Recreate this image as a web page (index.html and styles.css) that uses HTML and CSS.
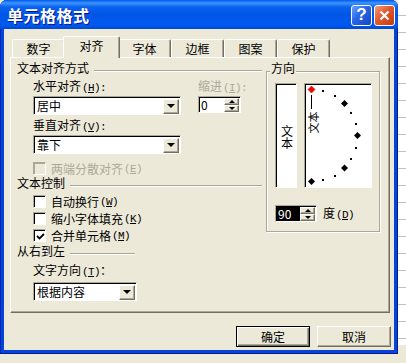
FILE: index.html
```html
<!DOCTYPE html>
<html lang="zh-CN">
<head>
    <meta charset="UTF-8">
    <meta name="viewport" content="width=device-width, initial-scale=1.0">
    <title>单元格格式</title>
    <link rel="stylesheet" href="styles.css">
</head>
<body>
    <div class="window">
        <div class="titlebar">
            <span class="title">单元格格式</span>
            <div class="caption-buttons">
                <span class="cap-btn help">?</span>
                <span class="cap-btn close">
                    <svg width="11" height="11" viewBox="0 0 11 11"><path d="M1.5 1.5 L9.5 9.5 M9.5 1.5 L1.5 9.5" stroke="#fff" stroke-width="2.2" fill="none"/></svg>
                </span>
            </div>
        </div>
        <div class="client">
            <div class="tabs">
                <span class="tab">数字</span>
                <span class="tab active">对齐</span>
                <span class="tab">字体</span>
                <span class="tab">边框</span>
                <span class="tab">图案</span>
                <span class="tab">保护</span>
            </div>
            <div class="panel">
                <div class="col-left">
                    <div class="section"><span>文本对齐方式</span></div>
                    <div class="align-grid">
                        <span class="lbl">水平对齐<span class="key">(<u>H</u>):</span></span>
                        <span class="lbl muted">缩进<span class="key">(<u>I</u>):</span></span>
                        <div class="combo"><span class="combo-text">居中</span><span class="drop"><i></i></span></div>
                        <div class="spin"><span class="spin-val">0</span><span class="spin-btns"><span class="up"><i></i></span><span class="down"><i></i></span></span></div>
                        <span class="lbl">垂直对齐<span class="key">(<u>V</u>):</span></span>
                        <span></span>
                        <div class="combo"><span class="combo-text">靠下</span><span class="drop"><i></i></span></div>
                    </div>
                    <div class="check muted first"><span class="box"></span>两端分散对齐<span class="key">(<u>E</u>)</span></div>
                    <div class="section"><span>文本控制</span></div>
                    <div class="checks">
                        <div class="check"><span class="box"></span>自动换行<span class="key">(<u>W</u>)</span></div>
                        <div class="check"><span class="box"></span>缩小字体填充<span class="key">(<u>K</u>)</span></div>
                        <div class="check"><span class="box"><svg width="9" height="9" viewBox="0 0 9 9"><path d="M1 4 L3.5 6.5 L8 2" stroke="#000" stroke-width="1.8" fill="none"/></svg></span>合并单元格<span class="key">(<u>M</u>)</span></div>
                    </div>
                    <div class="section short"><span>从右到左</span></div>
                    <div class="field-label">文字方向<span class="key">(<u>T</u>)</span>：</div>
                    <div class="combo narrow"><span class="combo-text">根据内容</span><span class="drop"><i></i></span></div>
                </div>
                <div class="group-dir">
                    <span class="legend">方向</span>
                    <div class="dir-boxes">
                        <div class="vert-box"><span>文本</span></div>
                        <div class="dial">
                            <svg width="64" height="101" viewBox="0 0 64 101">
                                <polygon points="5.5,1 9,4.5 5.5,8 2,4.5" fill="#f00" stroke="#800" stroke-width="0.5"/>
                                <line x1="5.5" y1="10" x2="5.5" y2="24" stroke="#000" stroke-width="1"/>
                                <text transform="translate(6.5,37.5) rotate(-90)" text-anchor="middle" dominant-baseline="central" font-size="11">文本</text>
                                <rect x="16" y="5" width="2" height="2"/>
                                <rect x="28" y="10" width="2" height="2"/>
                                <polygon points="38.5,15 42,18.5 38.5,22 35,18.5"/>
                                <rect x="44" y="27" width="2" height="2"/>
                                <rect x="49" y="38" width="2" height="2"/>
                                <polygon points="51.5,47 55,50.5 51.5,54 48,50.5"/>
                                <rect x="49" y="62" width="2" height="2"/>
                                <rect x="44" y="73" width="2" height="2"/>
                                <polygon points="38.5,79.5 42,83 38.5,86.5 35,83"/>
                                <rect x="28" y="90" width="2" height="2"/>
                                <rect x="16" y="94" width="2" height="2"/>
                                <polygon points="5.5,93 9,96.5 5.5,100 2,96.5"/>
                            </svg>
                        </div>
                    </div>
                    <div class="deg-row">
                        <div class="spin deg"><span class="spin-val selected">90</span><span class="spin-btns"><span class="up"><i></i></span><span class="down"><i></i></span></span></div>
                        <span>度<span class="key">(<u>D</u>)</span></span>
                    </div>
                </div>
            </div>
            <div class="actions">
                <button class="btn default">确定</button>
                <button class="btn">取消</button>
            </div>
        </div>
    </div>
    <div class="sheet-edge"></div>
</body>
</html>
```

FILE: styles.css
```css
body {
    margin: 0;
    background: #ece9d8;
    font-family: 'Noto Sans CJK SC', 'Noto Sans', sans-serif;
    font-size: 12px;
    line-height: 12px;
    color: #000;
    text-autospace: no-autospace;
    display: flex;
    align-items: flex-start;
}
u {
    text-decoration: underline;
    text-underline-offset: 1px;
}
.key {
    font-family: 'Liberation Mono', monospace;
    font-size: 11px;
    letter-spacing: -0.6px;
    margin-left: 1px;
}
.muted {
    color: #aca899;
}
.lbl,
.check,
.field-label {
    white-space: nowrap;
}

/* window frame */
.window {
    width: 398px;
    height: 354px;
    box-sizing: border-box;
    background: #0843d8;
    border-radius: 7px 7px 0 0;
    display: flex;
    flex-direction: column;
    box-shadow: inset 0 -1px #001b94, inset -1px 0 #001b94, inset 1px 0 #0028b8;
}
.titlebar {
    height: 29px;
    flex: none;
    display: flex;
    align-items: center;
    justify-content: space-between;
    border-radius: 7px 7px 0 0;
    background: linear-gradient(#0058ee 0, #3d95ff 3px, #0a62ee 7px, #0055e5 50%, #005af0 85%, #0048d6 100%);
}
.title {
    margin-left: 7px;
    color: #fff;
    font-size: 16px;
    font-weight: bold;
    line-height: 16px;
    letter-spacing: 0.5px;
    text-shadow: 1px 1px #0a1883;
}
.caption-buttons {
    display: flex;
    gap: 2px;
    margin-right: 3px;
    margin-top: 1px;
}
.cap-btn {
    width: 21px;
    height: 21px;
    box-sizing: border-box;
    border: 1px solid #fff;
    border-radius: 3px;
    display: flex;
    align-items: center;
    justify-content: center;
    color: #fff;
}
.help {
    background: linear-gradient(135deg, #6fa2ff, #2763e6 45%, #1446c8);
    font-family: 'Liberation Sans', sans-serif;
    font-size: 17px;
    font-weight: bold;
}
.close {
    background: linear-gradient(135deg, #f39a7d, #e2572b 45%, #c33a12);
}

.client {
    flex: 1;
    margin: 0 4px 4px;
    background: #ece9d8;
    display: flex;
    flex-direction: column;
}

/* tabs */
.tabs {
    display: flex;
    align-items: flex-end;
    height: 21px;
    margin-top: 7px;
    padding-left: 8px;
}
.tab {
    width: 53px;
    height: 18px;
    box-sizing: border-box;
    border-top: 1px solid #fff;
    border-left: 1px solid #fff;
    border-right: 1px solid #716f64;
    border-radius: 2px 2px 0 0;
    box-shadow: inset -1px 0 #aca899;
    display: flex;
    align-items: center;
    justify-content: center;
    padding-top: 1px;
}
.tab.active {
    width: 57px;
    height: 22px;
    margin: 0 -2px -1px;
    padding-top: 0;
    padding-bottom: 3px;
    background: #ece9d8;
    position: relative;
    z-index: 1;
}

.panel {
    width: 380px;
    height: 256px;
    box-sizing: border-box;
    margin-left: 6px;
    border: 1px solid;
    border-color: #fff #716f64 #716f64 #fff;
    box-shadow: inset -1px -1px #aca899;
    display: flex;
    align-items: flex-start;
}
.col-left {
    width: 245px;
    margin-left: 6px;
    display: flex;
    flex-direction: column;
    align-items: flex-start;
}

/* etched section headers */
.section {
    display: flex;
    align-self: stretch;
    height: 12px;
    margin-top: 4px;
}
.section::after {
    content: '';
    flex: 1;
    height: 0;
    margin-top: 8px;
    margin-left: 5px;
    border-top: 1px solid #aca899;
    border-bottom: 1px solid #fff;
}
.section.short {
    align-self: flex-start;
    width: 118px;
    margin-top: 1px;
}

.align-grid {
    display: grid;
    grid-template-columns: 148px 43px;
    grid-template-rows: 12px 19px 12px 19px;
    column-gap: 17px;
    row-gap: 4px;
    margin: 6px 0 0 16px;
}

/* sunken fields */
.combo,
.spin,
.vert-box,
.dial {
    box-sizing: border-box;
    background: #fff;
    border: 1px solid;
    border-color: #aca899 #fff #fff #aca899;
    box-shadow: inset 1px 1px #000;
}
.combo {
    height: 19px;
    display: flex;
    align-items: center;
    justify-content: space-between;
    padding: 1px 1px 0 3px;
}
.combo.narrow {
    width: 104px;
    margin: 4px 0 0 16px;
}
.drop,
.spin-btns span {
    background: #ece9d8;
    box-sizing: border-box;
    border: 1px solid;
    border-color: #fff #716f64 #716f64 #fff;
    box-shadow: inset -1px -1px #aca899;
    display: flex;
    align-items: center;
    justify-content: center;
}
.drop {
    width: 16px;
    height: 15px;
}
.drop i {
    border-left: 4px solid transparent;
    border-right: 4px solid transparent;
    border-top: 4px solid #000;
}
.spin {
    height: 17px;
    display: flex;
    align-items: center;
    justify-content: space-between;
    padding: 1px 1px 0 2px;
}
.spin-btns {
    display: flex;
    flex-direction: column;
    align-self: stretch;
}
.spin-btns span {
    width: 15px;
    flex: 1;
}
.spin-btns .up i {
    border-left: 3px solid transparent;
    border-right: 3px solid transparent;
    border-bottom: 3px solid #000;
}
.spin-btns .down i {
    border-left: 3px solid transparent;
    border-right: 3px solid transparent;
    border-top: 3px solid #000;
}

/* check boxes */
.check {
    height: 17px;
    display: flex;
    align-items: center;
    margin-left: 16px;
}
.check .box {
    margin-right: 5px;
}
.check.first {
    margin-top: 6px;
}
.check + .section {
    margin-top: 0;
}
.checks {
    margin-top: 4px;
}
.box {
    width: 13px;
    height: 13px;
    box-sizing: border-box;
    background: #fff;
    border: 1px solid;
    border-color: #aca899 #fff #fff #aca899;
    box-shadow: inset 1px 1px #000;
    display: flex;
    align-items: center;
    justify-content: center;
    padding: 1px 0 0 1px;
}
.check.muted .box {
    background: #ece9d8;
    box-shadow: inset 1px 1px #aca899;
}
.field-label {
    margin: 7px 0 0 16px;
}

/* orientation group */
.group-dir {
    width: 114px;
    height: 161px;
    box-sizing: border-box;
    margin: 13px 0 0 4px;
    border: 1px solid #aca899;
    box-shadow: 1px 1px #fff, inset 1px 1px #fff;
    display: flex;
    flex-direction: column;
    align-items: flex-start;
}
.legend {
    margin: -10px 0 0 3px;
    padding: 0 1px;
    background: #ece9d8;
}
.dir-boxes {
    display: flex;
    gap: 7px;
    margin: 9px 0 0 8px;
}
.vert-box {
    width: 22px;
    height: 105px;
    display: flex;
    align-items: center;
    justify-content: center;
}
.vert-box span {
    writing-mode: vertical-rl;
    text-orientation: upright;
    margin: 2px 0 0 1px;
}
.dial {
    width: 68px;
    height: 105px;
    padding: 1px;
    overflow: hidden;
}
.dial svg {
    display: block;
}
.deg-row {
    display: flex;
    align-items: center;
    gap: 6px;
    margin: 17px 0 0 8px;
}
.spin.deg {
    width: 42px;
    padding-left: 1px;
}
.spin-val.selected {
    background: #000;
    color: #fff;
    flex: 1;
    align-self: stretch;
    display: flex;
    align-items: center;
    padding-left: 1px;
}

/* dialog buttons */
.actions {
    display: flex;
    justify-content: flex-end;
    gap: 7px;
    margin-top: 13px;
    padding-right: 3px;
}
.btn {
    width: 74px;
    height: 21px;
    box-sizing: border-box;
    font: inherit;
    color: #000;
    background: #ece9d8;
    border: 1px solid;
    border-color: #fff #716f64 #716f64 #fff;
    box-shadow: inset -1px -1px #aca899;
    padding: 0;
}
.btn.default {
    border-color: #000;
    box-shadow: inset 1px 1px #fff, inset -1px -1px #716f64, inset -2px -2px #aca899;
}

/* spreadsheet behind the dialog */
.sheet-edge {
    width: 8px;
    height: 345px;
    background: repeating-linear-gradient(#fff 0 16px, #c0c0c0 16px 17px);
    background-position: 0 -1px;
}
```
